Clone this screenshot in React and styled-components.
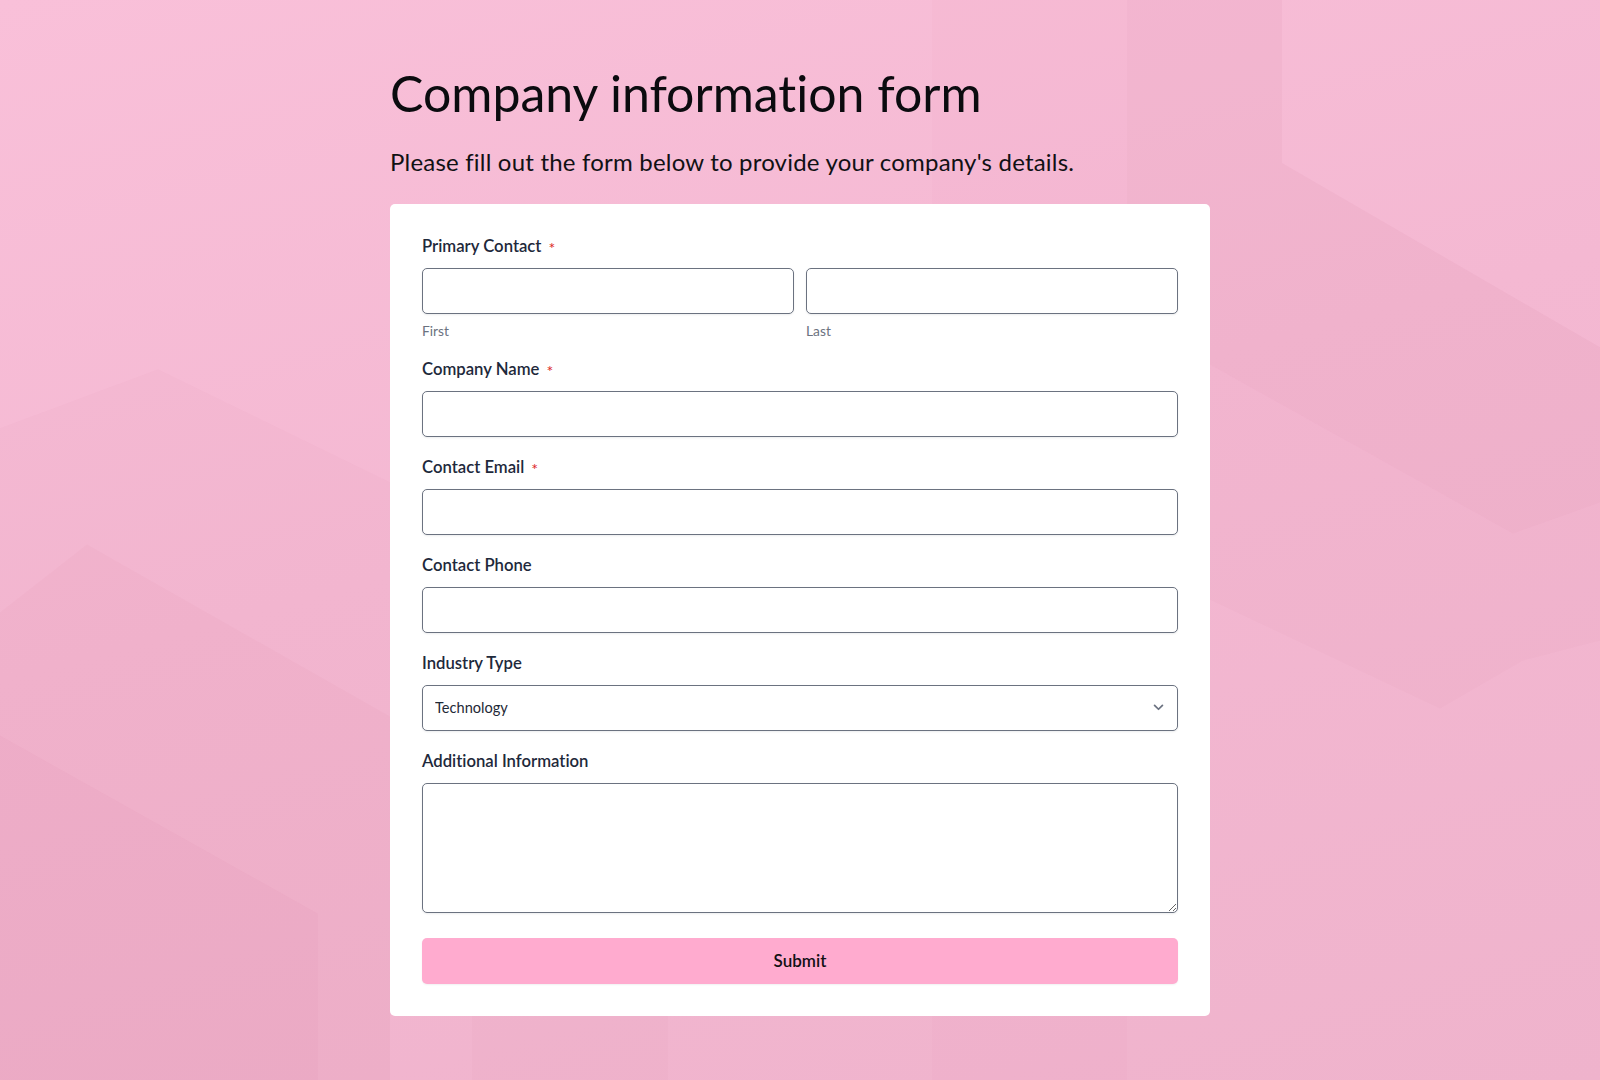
import React from "react";
//styling
import styled, {createGlobalStyle} from "styled-components";

const GlobalStyle = createGlobalStyle`
	*{
		box-sizing:border-box;
	}
	body{
		margin:0;
		font-family:'Lato', 'Noto Sans', sans-serif;
		font-variant-ligatures:none;
		color:#1e293b;
	}
`;

//background shapes: faint isometric faces
const shapes = [
	{points:"932,0 1127,0 1127,1080 932,1080", o:0.025},
	{points:"1127,0 1282,0 1282,163 1600,347 1600,502 1513,533 1127,318", o:0.06},
	{points:"1127,318 1513,533 1600,502 1600,640 1523,660 1440,708 1127,560", o:0.03},
	{points:"0,428 158,369 390,482 390,1080 0,1080", o:0.03},
	{points:"0,612 87,544 390,716 390,1080 0,1080", o:0.035},
	{points:"0,735 318,913 318,1080 0,1080", o:0.04},
	{points:"472,1015 668,1015 668,1080 472,1080", o:0.03},
];

const Backdrop = () => (
	<BackdropSvg viewBox="0 0 1600 1080" preserveAspectRatio="none">
		{shapes.map((s, i) => (
			<polygon key={i} points={s.points} fill="#c0507f" fillOpacity={s.o}/>
		))}
	</BackdropSvg>
);

const Field = ({label, required, children, last}) => (
	<FieldGroup last={last}>
		<Label>
			{label}
			{required && <Required>*</Required>}
		</Label>
		{children}
	</FieldGroup>
);

const App = () => {
	const submitHandler = (e) => {
		e.preventDefault();
	};
	return(
		<>
		<GlobalStyle/>
		<Page>
			<Backdrop/>
			<Wrapper>
				<Title>Company information form</Title>
				<Intro>Please fill out the form below to provide your company's details.</Intro>
				<Card onSubmit={submitHandler}>
					<Field label="Primary Contact" required>
						<NameRow>
							<div>
								<Input type="text"/>
								<SubLabel>First</SubLabel>
							</div>
							<div>
								<Input type="text"/>
								<SubLabel>Last</SubLabel>
							</div>
						</NameRow>
					</Field>
					<Field label="Company Name" required>
						<Input type="text"/>
					</Field>
					<Field label="Contact Email" required>
						<Input type="email"/>
					</Field>
					<Field label="Contact Phone">
						<Input type="tel"/>
					</Field>
					<Field label="Industry Type">
						<SelectWrap>
							<Select defaultValue="Technology">
								<option>Technology</option>
								<option>Finance</option>
								<option>Healthcare</option>
								<option>Manufacturing</option>
								<option>Retail</option>
								<option>Other</option>
							</Select>
							<Chevron viewBox="0 0 12 8">
								<path d="M1.5 1.5 L6 6 L10.5 1.5" fill="none" stroke="#6b7280" strokeWidth="2" strokeLinecap="round" strokeLinejoin="round"/>
							</Chevron>
						</SelectWrap>
					</Field>
					<Field label="Additional Information" last>
						<TextArea/>
					</Field>
					<SubmitButton type="submit">Submit</SubmitButton>
				</Card>
			</Wrapper>
		</Page>
		</>
	);
};

const Page = styled.div`
	position:relative;
	min-height:100vh;
	overflow:hidden;
	background:linear-gradient(165deg, #f9c0d9 0%, #f4b8d2 45%, #efb3cc 100%);
	padding:63px 0 65px;
`;

const BackdropSvg = styled.svg`
	position:absolute;
	top:0;
	left:0;
	width:100%;
	height:100%;
	pointer-events:none;
`;

const Wrapper = styled.div`
	position:relative;
	width:820px;
	margin:0 auto;
`;

const Title = styled.h1`
	margin:0 0 25px;
	font-size:50px;
	line-height:1.2;
	font-weight:400;
	color:#0b0b0f;
`;

const Intro = styled.p`
	margin:0 0 27px;
	font-size:24px;
	line-height:1.2;
	letter-spacing:0.2px;
	color:#111114;
`;

const Card = styled.form`
	background:#ffffff;
	border-radius:5px;
	padding:32px;
`;

const FieldGroup = styled.div`
	margin-bottom:${props => props.last ? "25px" : "20px"};
`;

const Label = styled.label`
	display:flex;
	align-items:center;
	height:20px;
	margin-bottom:12px;
	font-size:16.7px;
	font-weight:600;
	color:#1e293b;
`;

const Required = styled.span`
	display:inline-block;
	margin-left:7px;
	font-size:16px;
	font-weight:400;
	line-height:1;
	color:#dc2626;
	transform:translateY(2px);
`;

const NameRow = styled.div`
	display:grid;
	grid-template-columns:1fr 1fr;
	gap:12px;
`;

const fieldBox = `
	display:block;
	width:100%;
	border:1px solid #6b7280;
	border-radius:5px;
	background:#ffffff;
	box-shadow:0 1px 2px rgba(15,23,42,0.08);
	font-family:'Lato', 'Noto Sans', sans-serif;
	color:#1f2937;
	outline:none;
`;

const Input = styled.input`
	${fieldBox}
	height:46px;
	padding:0 12px;
	font-size:14.6px;
`;

const SubLabel = styled.div`
	margin-top:9px;
	font-size:13.8px;
	line-height:16px;
	color:#6b7280;
`;

const SelectWrap = styled.div`
	position:relative;
`;

const Select = styled.select`
	${fieldBox}
	appearance:none;
	height:46px;
	padding:0 36px 0 12px;
	font-size:14.6px;
`;

const Chevron = styled.svg`
	position:absolute;
	right:14px;
	top:19px;
	width:11px;
	height:7px;
	pointer-events:none;
`;

const TextArea = styled.textarea`
	${fieldBox}
	height:130px;
	padding:10px 12px;
	font-size:14.6px;
	resize:vertical;
`;

const SubmitButton = styled.button`
	display:block;
	width:100%;
	height:46px;
	border:none;
	border-radius:5px;
	background:#ffabcf;
	box-shadow:0 1px 2px rgba(15,23,42,0.06);
	font-family:'Lato', 'Noto Sans', sans-serif;
	font-size:17px;
	font-weight:600;
	color:#111114;
	cursor:pointer;
`;

export default App;
